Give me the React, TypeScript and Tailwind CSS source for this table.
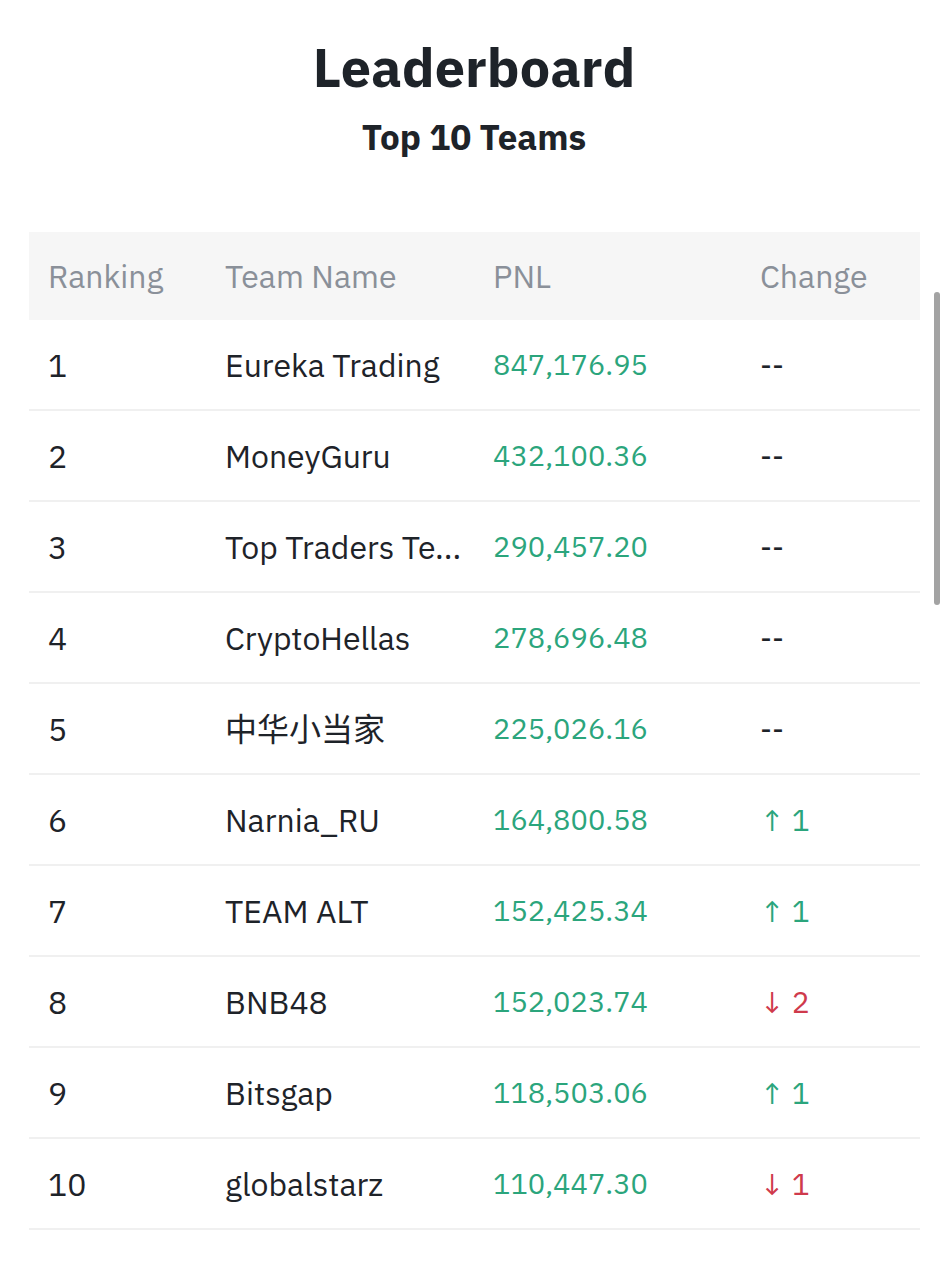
import React from "react";

type Row = { rank: number; name: string; pnl: string; change: { dir: "up" | "down" | "none"; n?: number } };

const rows: Row[] = [
  { rank: 1, name: "Eureka Trading", pnl: "847,176.95", change: { dir: "none" } },
  { rank: 2, name: "MoneyGuru", pnl: "432,100.36", change: { dir: "none" } },
  { rank: 3, name: "Top Traders Te...", pnl: "290,457.20", change: { dir: "none" } },
  { rank: 4, name: "CryptoHellas", pnl: "278,696.48", change: { dir: "none" } },
  { rank: 5, name: "中华小当家", pnl: "225,026.16", change: { dir: "none" } },
  { rank: 6, name: "Narnia_RU", pnl: "164,800.58", change: { dir: "up", n: 1 } },
  { rank: 7, name: "TEAM ALT", pnl: "152,425.34", change: { dir: "up", n: 1 } },
  { rank: 8, name: "BNB48", pnl: "152,023.74", change: { dir: "down", n: 2 } },
  { rank: 9, name: "Bitsgap", pnl: "118,503.06", change: { dir: "up", n: 1 } },
  { rank: 10, name: "globalstarz", pnl: "110,447.30", change: { dir: "down", n: 1 } },
];

const font = { fontFamily: '"IBM Plex Sans", Inter, "Noto Sans CJK SC", sans-serif' };

export default function App() {
  return (
    <div className="relative w-[948px] min-h-[1280px] bg-white text-[#1e2329]" style={font}>
      <div className="flex flex-col items-center pt-[34px]">
        <h1 className="text-[54px] leading-[66px] font-bold text-[#1e2329]">Leaderboard</h1>
        <h2 className="mt-[15px] text-[35px] leading-[44px] font-bold text-[#1e2329]">Top 10 Teams</h2>
      </div>
      <div className="mt-[73px] ml-[29px] mr-[28px]">
        <div className="grid h-[88px] grid-cols-[177px_268px_267px_1fr] items-center bg-[#f6f6f6] pl-[19px] text-[32px] text-[#8a9099]">
          <div>Ranking</div>
          <div>Team Name</div>
          <div>PNL</div>
          <div>Change</div>
        </div>
        {rows.map((r) => (
          <div
            key={r.rank}
            className="grid h-[91px] grid-cols-[177px_268px_267px_1fr] items-center border-b-2 border-[#f0f0f0] pl-[19px] text-[32px]"
          >
            <div className="text-[#1e2329]">{r.rank}</div>
            <div className="whitespace-nowrap text-[#1e2329]">{r.name}</div>
            <div className="text-[29px] text-[#2ba57c]">{r.pnl}</div>
            <div className="text-[30px]">
              {r.change.dir === "none" ? (
                <span className="text-[#1e2329]">--</span>
              ) : r.change.dir === "up" ? (
                <span className="text-[#2ba57c]">↑ {r.change.n}</span>
              ) : (
                <span className="text-[#cf3a4c]">↓ {r.change.n}</span>
              )}
            </div>
          </div>
        ))}
      </div>
      <div className="absolute left-[934px] top-[292px] h-[313px] w-[6px] rounded-full bg-[#a3a3a3]" />
    </div>
  );
}
